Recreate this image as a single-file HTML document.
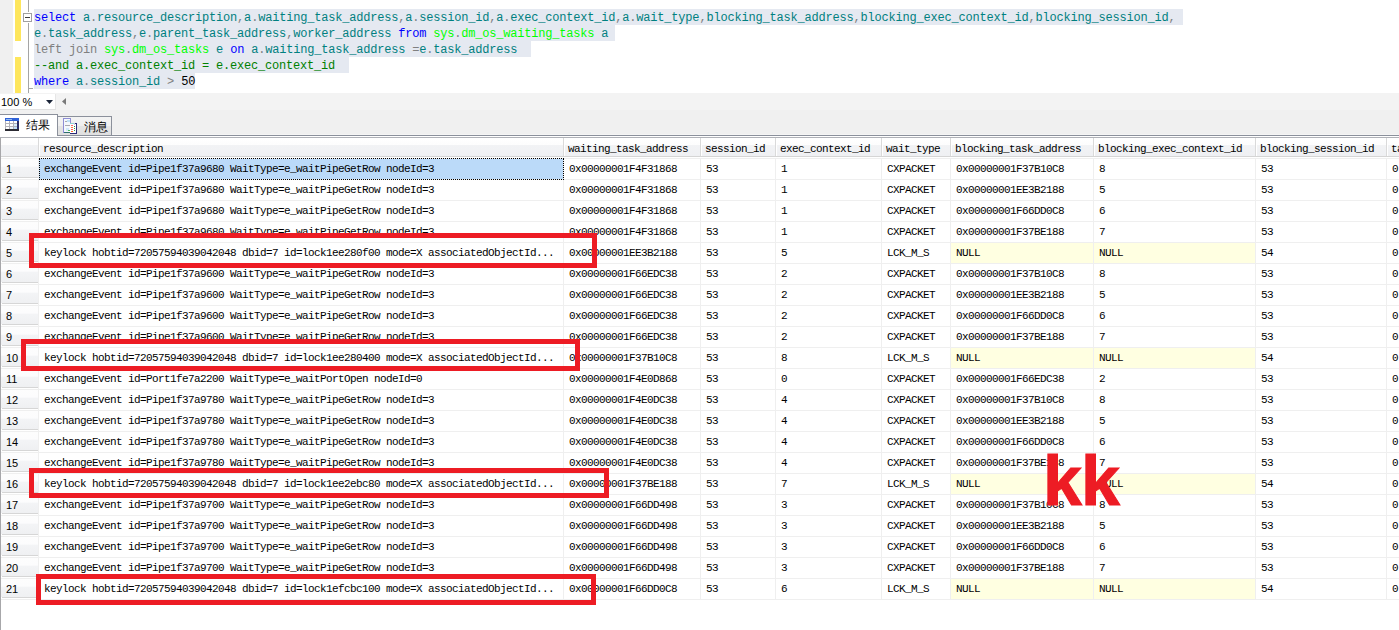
<!DOCTYPE html><html><head><meta charset="utf-8"><style>
*{margin:0;padding:0;box-sizing:border-box}
html,body{width:1399px;height:630px;overflow:hidden;background:#fff;position:relative}
.a{position:absolute}
.code{font-family:"Liberation Mono",monospace;font-size:12px;letter-spacing:-0.2px;line-height:16px;white-space:pre;left:34px;height:16px}
.g{font-family:"Liberation Mono",monospace;font-size:11px;letter-spacing:-0.6px;white-space:pre;line-height:20px;height:20px;color:#000}
.hd{font-family:"Liberation Mono",monospace;font-size:11px;letter-spacing:-0.6px;white-space:pre;line-height:19px;color:#000}
.rh{font-family:"Liberation Sans",sans-serif;font-size:11px;line-height:21px;color:#000;left:6px}
.rb{border:5px solid #ed1c24}
</style></head><body>
<div class="a" style="left:0;top:0;width:13px;height:93px;background:#f0f0f0"></div>
<div class="a" style="left:15px;top:0;width:6px;height:41px;background:#fee65c"></div>
<div class="a" style="left:15px;top:57px;width:6px;height:36px;background:#fee65c"></div>
<div class="a" style="left:28px;top:0;width:1px;height:12px;background:#a5a5a5"></div>
<div class="a" style="left:28px;top:23px;width:1px;height:70px;background:#a5a5a5"></div>
<div class="a" style="left:28px;top:88px;width:5px;height:1px;background:#a5a5a5"></div>
<div class="a" style="left:23px;top:13px;width:9px;height:9px;border:1px solid #a0a0a0;background:#fff"></div>
<div class="a" style="left:25px;top:17px;width:5px;height:1px;background:#3c3c3c"></div>
<div class="a" style="left:34px;top:9px;width:1149px;height:16px;background:#e5e9f1"></div>
<div class="a" style="left:34px;top:25px;width:581px;height:16px;background:#e5e9f1"></div>
<div class="a" style="left:34px;top:41px;width:497px;height:16px;background:#e5e9f1"></div>
<div class="a" style="left:34px;top:57px;width:315px;height:16px;background:#e5e9f1"></div>
<div class="a" style="left:34px;top:73px;width:161px;height:16px;background:#e5e9f1"></div>
<div class="a code" style="top:10px"><span style="color:#0000ff">select</span><span style="color:#000000"> </span><span style="color:#008080">a</span><span style="color:#808080">.</span><span style="color:#008080">resource_description</span><span style="color:#808080">,</span><span style="color:#008080">a</span><span style="color:#808080">.</span><span style="color:#008080">waiting_task_address</span><span style="color:#808080">,</span><span style="color:#008080">a</span><span style="color:#808080">.</span><span style="color:#008080">session_id</span><span style="color:#808080">,</span><span style="color:#008080">a</span><span style="color:#808080">.</span><span style="color:#008080">exec_context_id</span><span style="color:#808080">,</span><span style="color:#008080">a</span><span style="color:#808080">.</span><span style="color:#008080">wait_type</span><span style="color:#808080">,</span><span style="color:#008080">blocking_task_address</span><span style="color:#808080">,</span><span style="color:#008080">blocking_exec_context_id</span><span style="color:#808080">,</span><span style="color:#008080">blocking_session_id</span><span style="color:#808080">,</span></div>
<div class="a code" style="top:26px"><span style="color:#008080">e</span><span style="color:#808080">.</span><span style="color:#008080">task_address</span><span style="color:#808080">,</span><span style="color:#008080">e</span><span style="color:#808080">.</span><span style="color:#008080">parent_task_address</span><span style="color:#808080">,</span><span style="color:#008080">worker_address</span><span style="color:#000000"> </span><span style="color:#0000ff">from</span><span style="color:#000000"> </span><span style="color:#00ff00">sys</span><span style="color:#808080">.</span><span style="color:#00ff00">dm_os_waiting_tasks</span><span style="color:#000000"> </span><span style="color:#008080">a</span></div>
<div class="a code" style="top:42px"><span style="color:#808080">left join</span><span style="color:#000000"> </span><span style="color:#00ff00">sys</span><span style="color:#808080">.</span><span style="color:#00ff00">dm_os_tasks</span><span style="color:#000000"> </span><span style="color:#008080">e</span><span style="color:#000000"> </span><span style="color:#0000ff">on</span><span style="color:#000000"> </span><span style="color:#008080">a</span><span style="color:#808080">.</span><span style="color:#008080">waiting_task_address</span><span style="color:#000000"> </span><span style="color:#808080">=</span><span style="color:#008080">e</span><span style="color:#808080">.</span><span style="color:#008080">task_address</span></div>
<div class="a code" style="top:58px"><span style="color:#008000">--and a.exec_context_id = e.exec_context_id</span></div>
<div class="a code" style="top:74px"><span style="color:#0000ff">where</span><span style="color:#000000"> </span><span style="color:#008080">a</span><span style="color:#808080">.</span><span style="color:#008080">session_id</span><span style="color:#000000"> </span><span style="color:#808080">&gt;</span><span style="color:#000000"> </span><span style="color:#000000">50</span></div>
<div class="a" style="left:0;top:93px;width:1399px;height:17px;background:#f3f3f3"></div>
<div class="a" style="left:0;top:94px;width:56px;height:16px;background:#fff;border-right:1px solid #e6e6e6;border-bottom:1px solid #e0e0e0"></div>
<div class="a" style="left:1px;top:95px;font-family:'Liberation Sans',sans-serif;font-size:11px;line-height:15px;color:#000">100 %</div>
<svg class="a" style="left:46px;top:100px" width="8" height="5"><path d="M0 0H7L3.5 4Z" fill="#1b2538"/></svg>
<svg class="a" style="left:61px;top:98px" width="6" height="8"><path d="M5 0V7L1 3.5Z" fill="#7a7a7a"/></svg>
<div class="a" style="left:0;top:110px;width:1399px;height:27px;background:#f0f0f0"></div>
<div class="a" style="left:57px;top:135px;width:1342px;height:1px;background:#8b909b"></div>
<div class="a" style="left:0;top:136px;width:1399px;height:1px;background:#fff"></div>
<div class="a" style="left:111px;top:134px;width:1288px;height:1px;background:#f5f5f5"></div>
<div class="a" style="left:0;top:137px;width:1399px;height:1px;background:#b0b2b8"></div>
<div class="a" style="left:57px;top:116px;width:55px;height:20px;border:1px solid #8b909b;background:linear-gradient(#f3f3f3 0%,#efefef 48%,#e4e4e4 52%,#e0e0e0 100%)"></div>
<div class="a" style="left:-1px;top:114px;width:59px;height:22px;border:1px solid #8b909b;border-bottom:none;background:#fff"></div>
<svg class="a" style="left:5px;top:118px" width="14" height="13" shape-rendering="crispEdges">
<rect x="0" y="0" width="14" height="13" fill="#b2b2ba"/>
<rect x="0" y="0" width="14" height="3" fill="#2f62d8"/>
<rect x="1" y="1" width="6" height="1" fill="#8fb8f2"/>
<rect x="1" y="3" width="3" height="2" fill="#fff"/><rect x="5" y="3" width="3" height="2" fill="#fff"/><rect x="9" y="3" width="3" height="2" fill="#fff"/>
<rect x="1" y="6" width="3" height="2" fill="#fff"/><rect x="5" y="6" width="3" height="2" fill="#fff"/><rect x="9" y="6" width="3" height="2" fill="#d8eefc"/>
<rect x="1" y="9" width="3" height="2" fill="#fff"/><rect x="5" y="9" width="3" height="2" fill="#eef6fd"/><rect x="9" y="9" width="3" height="2" fill="#bfe0fa"/>
<rect x="12" y="3" width="2" height="10" fill="#2a2f6a"/>
<rect x="0" y="11" width="14" height="2" fill="#2b2b33"/>
</svg>
<div class="a" style="left:26px;top:118px;font-family:'Liberation Sans',sans-serif;font-size:12px;line-height:14px;color:#000">结果</div>
<svg class="a" style="left:63px;top:118px" width="15" height="16" shape-rendering="crispEdges">
<rect x="0" y="0" width="8" height="15" fill="#8e8ed6"/>
<rect x="1" y="1" width="6" height="13" fill="#f4f8fc"/>
<rect x="2" y="3" width="5" height="1" fill="#a8a8b0"/>
<rect x="4" y="2" width="3" height="2" fill="#bfe0f8"/>
<rect x="2" y="7" width="5" height="1" fill="#a8a8b0"/>
<rect x="3" y="10" width="3" height="3" fill="#cfe8fa"/>
<rect x="5" y="12" width="2" height="1" fill="#50c050"/>
<rect x="1" y="14" width="6" height="1" fill="#2f6f6f"/>
<rect x="7" y="5" width="7" height="11" fill="#2a2a78"/>
<rect x="7" y="5" width="4" height="1" fill="#8fd0d0"/>
<rect x="7" y="6" width="6" height="9" fill="#fff"/>
<rect x="11" y="5" width="1" height="2" fill="#c8c8e8"/>
<rect x="8" y="7" width="2" height="1" fill="#ff6a6a"/><rect x="11" y="8" width="1" height="1" fill="#3a8a3a"/>
<rect x="8" y="9" width="2" height="1" fill="#ff7a3a"/><rect x="11" y="10" width="1" height="1" fill="#3a9a3a"/>
<rect x="8" y="11" width="2" height="1" fill="#ff5a5a"/><rect x="11" y="12" width="1" height="1" fill="#3a9a3a"/>
<rect x="8" y="13" width="2" height="1" fill="#ff6a2a"/>
</svg>
<div class="a" style="left:84px;top:120px;font-family:'Liberation Sans',sans-serif;font-size:12px;line-height:14px;color:#000">消息</div>
<div class="a" style="left:0;top:138px;width:1px;height:492px;background:#a7a7aa"></div>
<div class="a" style="left:1px;top:138px;width:1398px;height:18px;background:linear-gradient(#ffffff 0%,#fdfdfd 38%,#f2f3f5 40%,#eff0f3 100%)"></div>
<div class="a" style="left:1px;top:156px;width:1398px;height:1px;background:#d5d5d5"></div>
<div class="a" style="left:38px;top:138px;width:1px;height:18px;background:#dadada"></div>
<div class="a" style="left:39px;top:138px;width:1px;height:18px;background:#fff"></div>
<div class="a" style="left:563px;top:138px;width:1px;height:18px;background:#dadada"></div>
<div class="a" style="left:564px;top:138px;width:1px;height:18px;background:#fff"></div>
<div class="a" style="left:700px;top:138px;width:1px;height:18px;background:#dadada"></div>
<div class="a" style="left:701px;top:138px;width:1px;height:18px;background:#fff"></div>
<div class="a" style="left:775px;top:138px;width:1px;height:18px;background:#dadada"></div>
<div class="a" style="left:776px;top:138px;width:1px;height:18px;background:#fff"></div>
<div class="a" style="left:881px;top:138px;width:1px;height:18px;background:#dadada"></div>
<div class="a" style="left:882px;top:138px;width:1px;height:18px;background:#fff"></div>
<div class="a" style="left:950px;top:138px;width:1px;height:18px;background:#dadada"></div>
<div class="a" style="left:951px;top:138px;width:1px;height:18px;background:#fff"></div>
<div class="a" style="left:1093px;top:138px;width:1px;height:18px;background:#dadada"></div>
<div class="a" style="left:1094px;top:138px;width:1px;height:18px;background:#fff"></div>
<div class="a" style="left:1255px;top:138px;width:1px;height:18px;background:#dadada"></div>
<div class="a" style="left:1256px;top:138px;width:1px;height:18px;background:#fff"></div>
<div class="a" style="left:1386px;top:138px;width:1px;height:18px;background:#dadada"></div>
<div class="a" style="left:1387px;top:138px;width:1px;height:18px;background:#fff"></div>
<div class="a hd" style="left:43px;top:140px">resource_description</div>
<div class="a hd" style="left:568px;top:140px">waiting_task_address</div>
<div class="a hd" style="left:705px;top:140px">session_id</div>
<div class="a hd" style="left:780px;top:140px">exec_context_id</div>
<div class="a hd" style="left:886px;top:140px">wait_type</div>
<div class="a hd" style="left:955px;top:140px">blocking_task_address</div>
<div class="a hd" style="left:1098px;top:140px">blocking_exec_context_id</div>
<div class="a hd" style="left:1260px;top:140px">blocking_session_id</div>
<div class="a hd" style="left:1391px;top:140px">task_address</div>
<div class="a" style="left:1px;top:158px;width:37px;height:19px;background:linear-gradient(#fdfdfd 0%,#fcfcfd 42%,#f3f4f6 50%,#eff0f2 100%)"></div>
<div class="a" style="left:2px;top:177px;width:36px;height:1px;background:#d6d6d6"></div>
<div class="a rh" style="top:159px">1</div>
<div class="a" style="left:39px;top:158px;width:525px;height:22px;background:#bbdaf9"></div>
<div class="a g" style="left:44px;top:159px">exchangeEvent id=Pipe1f37a9680 WaitType=e_waitPipeGetRow nodeId=3</div>
<div class="a g" style="left:569px;top:159px">0x00000001F4F31868</div>
<div class="a g" style="left:706px;top:159px">53</div>
<div class="a g" style="left:781px;top:159px">1</div>
<div class="a g" style="left:887px;top:159px">CXPACKET</div>
<div class="a g" style="left:956px;top:159px">0x00000001F37B10C8</div>
<div class="a g" style="left:1099px;top:159px">8</div>
<div class="a g" style="left:1261px;top:159px">53</div>
<div class="a g" style="left:1392px;top:159px">0</div>
<div class="a" style="left:1px;top:179px;width:37px;height:19px;background:linear-gradient(#fdfdfd 0%,#fcfcfd 42%,#f3f4f6 50%,#eff0f2 100%)"></div>
<div class="a" style="left:2px;top:198px;width:36px;height:1px;background:#d6d6d6"></div>
<div class="a rh" style="top:180px">2</div>
<div class="a g" style="left:44px;top:180px">exchangeEvent id=Pipe1f37a9680 WaitType=e_waitPipeGetRow nodeId=3</div>
<div class="a g" style="left:569px;top:180px">0x00000001F4F31868</div>
<div class="a g" style="left:706px;top:180px">53</div>
<div class="a g" style="left:781px;top:180px">1</div>
<div class="a g" style="left:887px;top:180px">CXPACKET</div>
<div class="a g" style="left:956px;top:180px">0x00000001EE3B2188</div>
<div class="a g" style="left:1099px;top:180px">5</div>
<div class="a g" style="left:1261px;top:180px">53</div>
<div class="a g" style="left:1392px;top:180px">0</div>
<div class="a" style="left:1px;top:200px;width:37px;height:19px;background:linear-gradient(#fdfdfd 0%,#fcfcfd 42%,#f3f4f6 50%,#eff0f2 100%)"></div>
<div class="a" style="left:2px;top:219px;width:36px;height:1px;background:#d6d6d6"></div>
<div class="a rh" style="top:201px">3</div>
<div class="a g" style="left:44px;top:201px">exchangeEvent id=Pipe1f37a9680 WaitType=e_waitPipeGetRow nodeId=3</div>
<div class="a g" style="left:569px;top:201px">0x00000001F4F31868</div>
<div class="a g" style="left:706px;top:201px">53</div>
<div class="a g" style="left:781px;top:201px">1</div>
<div class="a g" style="left:887px;top:201px">CXPACKET</div>
<div class="a g" style="left:956px;top:201px">0x00000001F66DD0C8</div>
<div class="a g" style="left:1099px;top:201px">6</div>
<div class="a g" style="left:1261px;top:201px">53</div>
<div class="a g" style="left:1392px;top:201px">0</div>
<div class="a" style="left:1px;top:221px;width:37px;height:19px;background:linear-gradient(#fdfdfd 0%,#fcfcfd 42%,#f3f4f6 50%,#eff0f2 100%)"></div>
<div class="a" style="left:2px;top:240px;width:36px;height:1px;background:#d6d6d6"></div>
<div class="a rh" style="top:222px">4</div>
<div class="a g" style="left:44px;top:222px">exchangeEvent id=Pipe1f37a9680 WaitType=e_waitPipeGetRow nodeId=3</div>
<div class="a g" style="left:569px;top:222px">0x00000001F4F31868</div>
<div class="a g" style="left:706px;top:222px">53</div>
<div class="a g" style="left:781px;top:222px">1</div>
<div class="a g" style="left:887px;top:222px">CXPACKET</div>
<div class="a g" style="left:956px;top:222px">0x00000001F37BE188</div>
<div class="a g" style="left:1099px;top:222px">7</div>
<div class="a g" style="left:1261px;top:222px">53</div>
<div class="a g" style="left:1392px;top:222px">0</div>
<div class="a" style="left:1px;top:242px;width:37px;height:19px;background:linear-gradient(#fdfdfd 0%,#fcfcfd 42%,#f3f4f6 50%,#eff0f2 100%)"></div>
<div class="a" style="left:2px;top:261px;width:36px;height:1px;background:#d6d6d6"></div>
<div class="a rh" style="top:243px">5</div>
<div class="a" style="left:951px;top:243px;width:304px;height:20px;background:#ffffe1"></div>
<div class="a g" style="left:44px;top:243px">keylock hobtid=72057594039042048 dbid=7 id=lock1ee280f00 mode=X associatedObjectId...</div>
<div class="a g" style="left:569px;top:243px">0x00000001EE3B2188</div>
<div class="a g" style="left:706px;top:243px">53</div>
<div class="a g" style="left:781px;top:243px">5</div>
<div class="a g" style="left:887px;top:243px">LCK_M_S</div>
<div class="a g" style="left:956px;top:243px">NULL</div>
<div class="a g" style="left:1099px;top:243px">NULL</div>
<div class="a g" style="left:1261px;top:243px">54</div>
<div class="a g" style="left:1392px;top:243px">0</div>
<div class="a" style="left:1px;top:263px;width:37px;height:19px;background:linear-gradient(#fdfdfd 0%,#fcfcfd 42%,#f3f4f6 50%,#eff0f2 100%)"></div>
<div class="a" style="left:2px;top:282px;width:36px;height:1px;background:#d6d6d6"></div>
<div class="a rh" style="top:264px">6</div>
<div class="a g" style="left:44px;top:264px">exchangeEvent id=Pipe1f37a9600 WaitType=e_waitPipeGetRow nodeId=3</div>
<div class="a g" style="left:569px;top:264px">0x00000001F66EDC38</div>
<div class="a g" style="left:706px;top:264px">53</div>
<div class="a g" style="left:781px;top:264px">2</div>
<div class="a g" style="left:887px;top:264px">CXPACKET</div>
<div class="a g" style="left:956px;top:264px">0x00000001F37B10C8</div>
<div class="a g" style="left:1099px;top:264px">8</div>
<div class="a g" style="left:1261px;top:264px">53</div>
<div class="a g" style="left:1392px;top:264px">0</div>
<div class="a" style="left:1px;top:284px;width:37px;height:19px;background:linear-gradient(#fdfdfd 0%,#fcfcfd 42%,#f3f4f6 50%,#eff0f2 100%)"></div>
<div class="a" style="left:2px;top:303px;width:36px;height:1px;background:#d6d6d6"></div>
<div class="a rh" style="top:285px">7</div>
<div class="a g" style="left:44px;top:285px">exchangeEvent id=Pipe1f37a9600 WaitType=e_waitPipeGetRow nodeId=3</div>
<div class="a g" style="left:569px;top:285px">0x00000001F66EDC38</div>
<div class="a g" style="left:706px;top:285px">53</div>
<div class="a g" style="left:781px;top:285px">2</div>
<div class="a g" style="left:887px;top:285px">CXPACKET</div>
<div class="a g" style="left:956px;top:285px">0x00000001EE3B2188</div>
<div class="a g" style="left:1099px;top:285px">5</div>
<div class="a g" style="left:1261px;top:285px">53</div>
<div class="a g" style="left:1392px;top:285px">0</div>
<div class="a" style="left:1px;top:305px;width:37px;height:19px;background:linear-gradient(#fdfdfd 0%,#fcfcfd 42%,#f3f4f6 50%,#eff0f2 100%)"></div>
<div class="a" style="left:2px;top:324px;width:36px;height:1px;background:#d6d6d6"></div>
<div class="a rh" style="top:306px">8</div>
<div class="a g" style="left:44px;top:306px">exchangeEvent id=Pipe1f37a9600 WaitType=e_waitPipeGetRow nodeId=3</div>
<div class="a g" style="left:569px;top:306px">0x00000001F66EDC38</div>
<div class="a g" style="left:706px;top:306px">53</div>
<div class="a g" style="left:781px;top:306px">2</div>
<div class="a g" style="left:887px;top:306px">CXPACKET</div>
<div class="a g" style="left:956px;top:306px">0x00000001F66DD0C8</div>
<div class="a g" style="left:1099px;top:306px">6</div>
<div class="a g" style="left:1261px;top:306px">53</div>
<div class="a g" style="left:1392px;top:306px">0</div>
<div class="a" style="left:1px;top:326px;width:37px;height:19px;background:linear-gradient(#fdfdfd 0%,#fcfcfd 42%,#f3f4f6 50%,#eff0f2 100%)"></div>
<div class="a" style="left:2px;top:345px;width:36px;height:1px;background:#d6d6d6"></div>
<div class="a rh" style="top:327px">9</div>
<div class="a g" style="left:44px;top:327px">exchangeEvent id=Pipe1f37a9600 WaitType=e_waitPipeGetRow nodeId=3</div>
<div class="a g" style="left:569px;top:327px">0x00000001F66EDC38</div>
<div class="a g" style="left:706px;top:327px">53</div>
<div class="a g" style="left:781px;top:327px">2</div>
<div class="a g" style="left:887px;top:327px">CXPACKET</div>
<div class="a g" style="left:956px;top:327px">0x00000001F37BE188</div>
<div class="a g" style="left:1099px;top:327px">7</div>
<div class="a g" style="left:1261px;top:327px">53</div>
<div class="a g" style="left:1392px;top:327px">0</div>
<div class="a" style="left:1px;top:347px;width:37px;height:19px;background:linear-gradient(#fdfdfd 0%,#fcfcfd 42%,#f3f4f6 50%,#eff0f2 100%)"></div>
<div class="a" style="left:2px;top:366px;width:36px;height:1px;background:#d6d6d6"></div>
<div class="a rh" style="top:348px">10</div>
<div class="a" style="left:951px;top:348px;width:304px;height:20px;background:#ffffe1"></div>
<div class="a g" style="left:44px;top:348px">keylock hobtid=72057594039042048 dbid=7 id=lock1ee280400 mode=X associatedObjectId...</div>
<div class="a g" style="left:569px;top:348px">0x00000001F37B10C8</div>
<div class="a g" style="left:706px;top:348px">53</div>
<div class="a g" style="left:781px;top:348px">8</div>
<div class="a g" style="left:887px;top:348px">LCK_M_S</div>
<div class="a g" style="left:956px;top:348px">NULL</div>
<div class="a g" style="left:1099px;top:348px">NULL</div>
<div class="a g" style="left:1261px;top:348px">54</div>
<div class="a g" style="left:1392px;top:348px">0</div>
<div class="a" style="left:1px;top:368px;width:37px;height:19px;background:linear-gradient(#fdfdfd 0%,#fcfcfd 42%,#f3f4f6 50%,#eff0f2 100%)"></div>
<div class="a" style="left:2px;top:387px;width:36px;height:1px;background:#d6d6d6"></div>
<div class="a rh" style="top:369px">11</div>
<div class="a g" style="left:44px;top:369px">exchangeEvent id=Port1fe7a2200 WaitType=e_waitPortOpen nodeId=0</div>
<div class="a g" style="left:569px;top:369px">0x00000001F4E0D868</div>
<div class="a g" style="left:706px;top:369px">53</div>
<div class="a g" style="left:781px;top:369px">0</div>
<div class="a g" style="left:887px;top:369px">CXPACKET</div>
<div class="a g" style="left:956px;top:369px">0x00000001F66EDC38</div>
<div class="a g" style="left:1099px;top:369px">2</div>
<div class="a g" style="left:1261px;top:369px">53</div>
<div class="a g" style="left:1392px;top:369px">0</div>
<div class="a" style="left:1px;top:389px;width:37px;height:19px;background:linear-gradient(#fdfdfd 0%,#fcfcfd 42%,#f3f4f6 50%,#eff0f2 100%)"></div>
<div class="a" style="left:2px;top:408px;width:36px;height:1px;background:#d6d6d6"></div>
<div class="a rh" style="top:390px">12</div>
<div class="a g" style="left:44px;top:390px">exchangeEvent id=Pipe1f37a9780 WaitType=e_waitPipeGetRow nodeId=3</div>
<div class="a g" style="left:569px;top:390px">0x00000001F4E0DC38</div>
<div class="a g" style="left:706px;top:390px">53</div>
<div class="a g" style="left:781px;top:390px">4</div>
<div class="a g" style="left:887px;top:390px">CXPACKET</div>
<div class="a g" style="left:956px;top:390px">0x00000001F37B10C8</div>
<div class="a g" style="left:1099px;top:390px">8</div>
<div class="a g" style="left:1261px;top:390px">53</div>
<div class="a g" style="left:1392px;top:390px">0</div>
<div class="a" style="left:1px;top:410px;width:37px;height:19px;background:linear-gradient(#fdfdfd 0%,#fcfcfd 42%,#f3f4f6 50%,#eff0f2 100%)"></div>
<div class="a" style="left:2px;top:429px;width:36px;height:1px;background:#d6d6d6"></div>
<div class="a rh" style="top:411px">13</div>
<div class="a g" style="left:44px;top:411px">exchangeEvent id=Pipe1f37a9780 WaitType=e_waitPipeGetRow nodeId=3</div>
<div class="a g" style="left:569px;top:411px">0x00000001F4E0DC38</div>
<div class="a g" style="left:706px;top:411px">53</div>
<div class="a g" style="left:781px;top:411px">4</div>
<div class="a g" style="left:887px;top:411px">CXPACKET</div>
<div class="a g" style="left:956px;top:411px">0x00000001EE3B2188</div>
<div class="a g" style="left:1099px;top:411px">5</div>
<div class="a g" style="left:1261px;top:411px">53</div>
<div class="a g" style="left:1392px;top:411px">0</div>
<div class="a" style="left:1px;top:431px;width:37px;height:19px;background:linear-gradient(#fdfdfd 0%,#fcfcfd 42%,#f3f4f6 50%,#eff0f2 100%)"></div>
<div class="a" style="left:2px;top:450px;width:36px;height:1px;background:#d6d6d6"></div>
<div class="a rh" style="top:432px">14</div>
<div class="a g" style="left:44px;top:432px">exchangeEvent id=Pipe1f37a9780 WaitType=e_waitPipeGetRow nodeId=3</div>
<div class="a g" style="left:569px;top:432px">0x00000001F4E0DC38</div>
<div class="a g" style="left:706px;top:432px">53</div>
<div class="a g" style="left:781px;top:432px">4</div>
<div class="a g" style="left:887px;top:432px">CXPACKET</div>
<div class="a g" style="left:956px;top:432px">0x00000001F66DD0C8</div>
<div class="a g" style="left:1099px;top:432px">6</div>
<div class="a g" style="left:1261px;top:432px">53</div>
<div class="a g" style="left:1392px;top:432px">0</div>
<div class="a" style="left:1px;top:452px;width:37px;height:19px;background:linear-gradient(#fdfdfd 0%,#fcfcfd 42%,#f3f4f6 50%,#eff0f2 100%)"></div>
<div class="a" style="left:2px;top:471px;width:36px;height:1px;background:#d6d6d6"></div>
<div class="a rh" style="top:453px">15</div>
<div class="a g" style="left:44px;top:453px">exchangeEvent id=Pipe1f37a9780 WaitType=e_waitPipeGetRow nodeId=3</div>
<div class="a g" style="left:569px;top:453px">0x00000001F4E0DC38</div>
<div class="a g" style="left:706px;top:453px">53</div>
<div class="a g" style="left:781px;top:453px">4</div>
<div class="a g" style="left:887px;top:453px">CXPACKET</div>
<div class="a g" style="left:956px;top:453px">0x00000001F37BE188</div>
<div class="a g" style="left:1099px;top:453px">7</div>
<div class="a g" style="left:1261px;top:453px">53</div>
<div class="a g" style="left:1392px;top:453px">0</div>
<div class="a" style="left:1px;top:473px;width:37px;height:19px;background:linear-gradient(#fdfdfd 0%,#fcfcfd 42%,#f3f4f6 50%,#eff0f2 100%)"></div>
<div class="a" style="left:2px;top:492px;width:36px;height:1px;background:#d6d6d6"></div>
<div class="a rh" style="top:474px">16</div>
<div class="a" style="left:951px;top:474px;width:304px;height:20px;background:#ffffe1"></div>
<div class="a g" style="left:44px;top:474px">keylock hobtid=72057594039042048 dbid=7 id=lock1ee2ebc80 mode=X associatedObjectId...</div>
<div class="a g" style="left:569px;top:474px">0x00000001F37BE188</div>
<div class="a g" style="left:706px;top:474px">53</div>
<div class="a g" style="left:781px;top:474px">7</div>
<div class="a g" style="left:887px;top:474px">LCK_M_S</div>
<div class="a g" style="left:956px;top:474px">NULL</div>
<div class="a g" style="left:1099px;top:474px">NULL</div>
<div class="a g" style="left:1261px;top:474px">54</div>
<div class="a g" style="left:1392px;top:474px">0</div>
<div class="a" style="left:1px;top:494px;width:37px;height:19px;background:linear-gradient(#fdfdfd 0%,#fcfcfd 42%,#f3f4f6 50%,#eff0f2 100%)"></div>
<div class="a" style="left:2px;top:513px;width:36px;height:1px;background:#d6d6d6"></div>
<div class="a rh" style="top:495px">17</div>
<div class="a g" style="left:44px;top:495px">exchangeEvent id=Pipe1f37a9700 WaitType=e_waitPipeGetRow nodeId=3</div>
<div class="a g" style="left:569px;top:495px">0x00000001F66DD498</div>
<div class="a g" style="left:706px;top:495px">53</div>
<div class="a g" style="left:781px;top:495px">3</div>
<div class="a g" style="left:887px;top:495px">CXPACKET</div>
<div class="a g" style="left:956px;top:495px">0x00000001F37B10C8</div>
<div class="a g" style="left:1099px;top:495px">8</div>
<div class="a g" style="left:1261px;top:495px">53</div>
<div class="a g" style="left:1392px;top:495px">0</div>
<div class="a" style="left:1px;top:515px;width:37px;height:19px;background:linear-gradient(#fdfdfd 0%,#fcfcfd 42%,#f3f4f6 50%,#eff0f2 100%)"></div>
<div class="a" style="left:2px;top:534px;width:36px;height:1px;background:#d6d6d6"></div>
<div class="a rh" style="top:516px">18</div>
<div class="a g" style="left:44px;top:516px">exchangeEvent id=Pipe1f37a9700 WaitType=e_waitPipeGetRow nodeId=3</div>
<div class="a g" style="left:569px;top:516px">0x00000001F66DD498</div>
<div class="a g" style="left:706px;top:516px">53</div>
<div class="a g" style="left:781px;top:516px">3</div>
<div class="a g" style="left:887px;top:516px">CXPACKET</div>
<div class="a g" style="left:956px;top:516px">0x00000001EE3B2188</div>
<div class="a g" style="left:1099px;top:516px">5</div>
<div class="a g" style="left:1261px;top:516px">53</div>
<div class="a g" style="left:1392px;top:516px">0</div>
<div class="a" style="left:1px;top:536px;width:37px;height:19px;background:linear-gradient(#fdfdfd 0%,#fcfcfd 42%,#f3f4f6 50%,#eff0f2 100%)"></div>
<div class="a" style="left:2px;top:555px;width:36px;height:1px;background:#d6d6d6"></div>
<div class="a rh" style="top:537px">19</div>
<div class="a g" style="left:44px;top:537px">exchangeEvent id=Pipe1f37a9700 WaitType=e_waitPipeGetRow nodeId=3</div>
<div class="a g" style="left:569px;top:537px">0x00000001F66DD498</div>
<div class="a g" style="left:706px;top:537px">53</div>
<div class="a g" style="left:781px;top:537px">3</div>
<div class="a g" style="left:887px;top:537px">CXPACKET</div>
<div class="a g" style="left:956px;top:537px">0x00000001F66DD0C8</div>
<div class="a g" style="left:1099px;top:537px">6</div>
<div class="a g" style="left:1261px;top:537px">53</div>
<div class="a g" style="left:1392px;top:537px">0</div>
<div class="a" style="left:1px;top:557px;width:37px;height:19px;background:linear-gradient(#fdfdfd 0%,#fcfcfd 42%,#f3f4f6 50%,#eff0f2 100%)"></div>
<div class="a" style="left:2px;top:576px;width:36px;height:1px;background:#d6d6d6"></div>
<div class="a rh" style="top:558px">20</div>
<div class="a g" style="left:44px;top:558px">exchangeEvent id=Pipe1f37a9700 WaitType=e_waitPipeGetRow nodeId=3</div>
<div class="a g" style="left:569px;top:558px">0x00000001F66DD498</div>
<div class="a g" style="left:706px;top:558px">53</div>
<div class="a g" style="left:781px;top:558px">3</div>
<div class="a g" style="left:887px;top:558px">CXPACKET</div>
<div class="a g" style="left:956px;top:558px">0x00000001F37BE188</div>
<div class="a g" style="left:1099px;top:558px">7</div>
<div class="a g" style="left:1261px;top:558px">53</div>
<div class="a g" style="left:1392px;top:558px">0</div>
<div class="a" style="left:1px;top:578px;width:37px;height:19px;background:linear-gradient(#fdfdfd 0%,#fcfcfd 42%,#f3f4f6 50%,#eff0f2 100%)"></div>
<div class="a" style="left:2px;top:597px;width:36px;height:1px;background:#d6d6d6"></div>
<div class="a rh" style="top:579px">21</div>
<div class="a" style="left:951px;top:579px;width:304px;height:20px;background:#ffffe1"></div>
<div class="a g" style="left:44px;top:579px">keylock hobtid=72057594039042048 dbid=7 id=lock1efcbc100 mode=X associatedObjectId...</div>
<div class="a g" style="left:569px;top:579px">0x00000001F66DD0C8</div>
<div class="a g" style="left:706px;top:579px">53</div>
<div class="a g" style="left:781px;top:579px">6</div>
<div class="a g" style="left:887px;top:579px">LCK_M_S</div>
<div class="a g" style="left:956px;top:579px">NULL</div>
<div class="a g" style="left:1099px;top:579px">NULL</div>
<div class="a g" style="left:1261px;top:579px">54</div>
<div class="a g" style="left:1392px;top:579px">0</div>
<div class="a" style="left:1px;top:158px;width:1398px;height:1px;background:#efefef"></div>
<div class="a" style="left:1px;top:179px;width:1398px;height:1px;background:#efefef"></div>
<div class="a" style="left:1px;top:200px;width:1398px;height:1px;background:#efefef"></div>
<div class="a" style="left:1px;top:221px;width:1398px;height:1px;background:#efefef"></div>
<div class="a" style="left:1px;top:242px;width:1398px;height:1px;background:#efefef"></div>
<div class="a" style="left:1px;top:263px;width:1398px;height:1px;background:#efefef"></div>
<div class="a" style="left:1px;top:284px;width:1398px;height:1px;background:#efefef"></div>
<div class="a" style="left:1px;top:305px;width:1398px;height:1px;background:#efefef"></div>
<div class="a" style="left:1px;top:326px;width:1398px;height:1px;background:#efefef"></div>
<div class="a" style="left:1px;top:347px;width:1398px;height:1px;background:#efefef"></div>
<div class="a" style="left:1px;top:368px;width:1398px;height:1px;background:#efefef"></div>
<div class="a" style="left:1px;top:389px;width:1398px;height:1px;background:#efefef"></div>
<div class="a" style="left:1px;top:410px;width:1398px;height:1px;background:#efefef"></div>
<div class="a" style="left:1px;top:431px;width:1398px;height:1px;background:#efefef"></div>
<div class="a" style="left:1px;top:452px;width:1398px;height:1px;background:#efefef"></div>
<div class="a" style="left:1px;top:473px;width:1398px;height:1px;background:#efefef"></div>
<div class="a" style="left:1px;top:494px;width:1398px;height:1px;background:#efefef"></div>
<div class="a" style="left:1px;top:515px;width:1398px;height:1px;background:#efefef"></div>
<div class="a" style="left:1px;top:536px;width:1398px;height:1px;background:#efefef"></div>
<div class="a" style="left:1px;top:557px;width:1398px;height:1px;background:#efefef"></div>
<div class="a" style="left:1px;top:578px;width:1398px;height:1px;background:#efefef"></div>
<div class="a" style="left:1px;top:599px;width:1398px;height:1px;background:#efefef"></div>
<div class="a" style="left:38px;top:158px;width:1px;height:441px;background:#efefef"></div>
<div class="a" style="left:563px;top:158px;width:1px;height:441px;background:#efefef"></div>
<div class="a" style="left:700px;top:158px;width:1px;height:441px;background:#efefef"></div>
<div class="a" style="left:775px;top:158px;width:1px;height:441px;background:#efefef"></div>
<div class="a" style="left:881px;top:158px;width:1px;height:441px;background:#efefef"></div>
<div class="a" style="left:950px;top:158px;width:1px;height:441px;background:#efefef"></div>
<div class="a" style="left:1093px;top:158px;width:1px;height:441px;background:#efefef"></div>
<div class="a" style="left:1255px;top:158px;width:1px;height:441px;background:#efefef"></div>
<div class="a" style="left:1386px;top:158px;width:1px;height:441px;background:#efefef"></div>
<div class="a" style="left:39px;top:158px;width:525px;height:22px;border:1px dotted #000"></div>
<div class="a rb" style="left:29px;top:233px;width:568px;height:35px"></div>
<div class="a rb" style="left:21px;top:339px;width:559px;height:32px"></div>
<div class="a rb" style="left:29px;top:468px;width:580px;height:30px"></div>
<div class="a rb" style="left:36px;top:574px;width:560px;height:31px"></div>
<div class="a" style="left:1043px;top:441px;font-family:'Liberation Sans',sans-serif;font-weight:bold;font-size:70px;letter-spacing:-1px;line-height:80px;color:#ed1c24;-webkit-text-stroke:1px #ed1c24">kk</div>
</body></html>
